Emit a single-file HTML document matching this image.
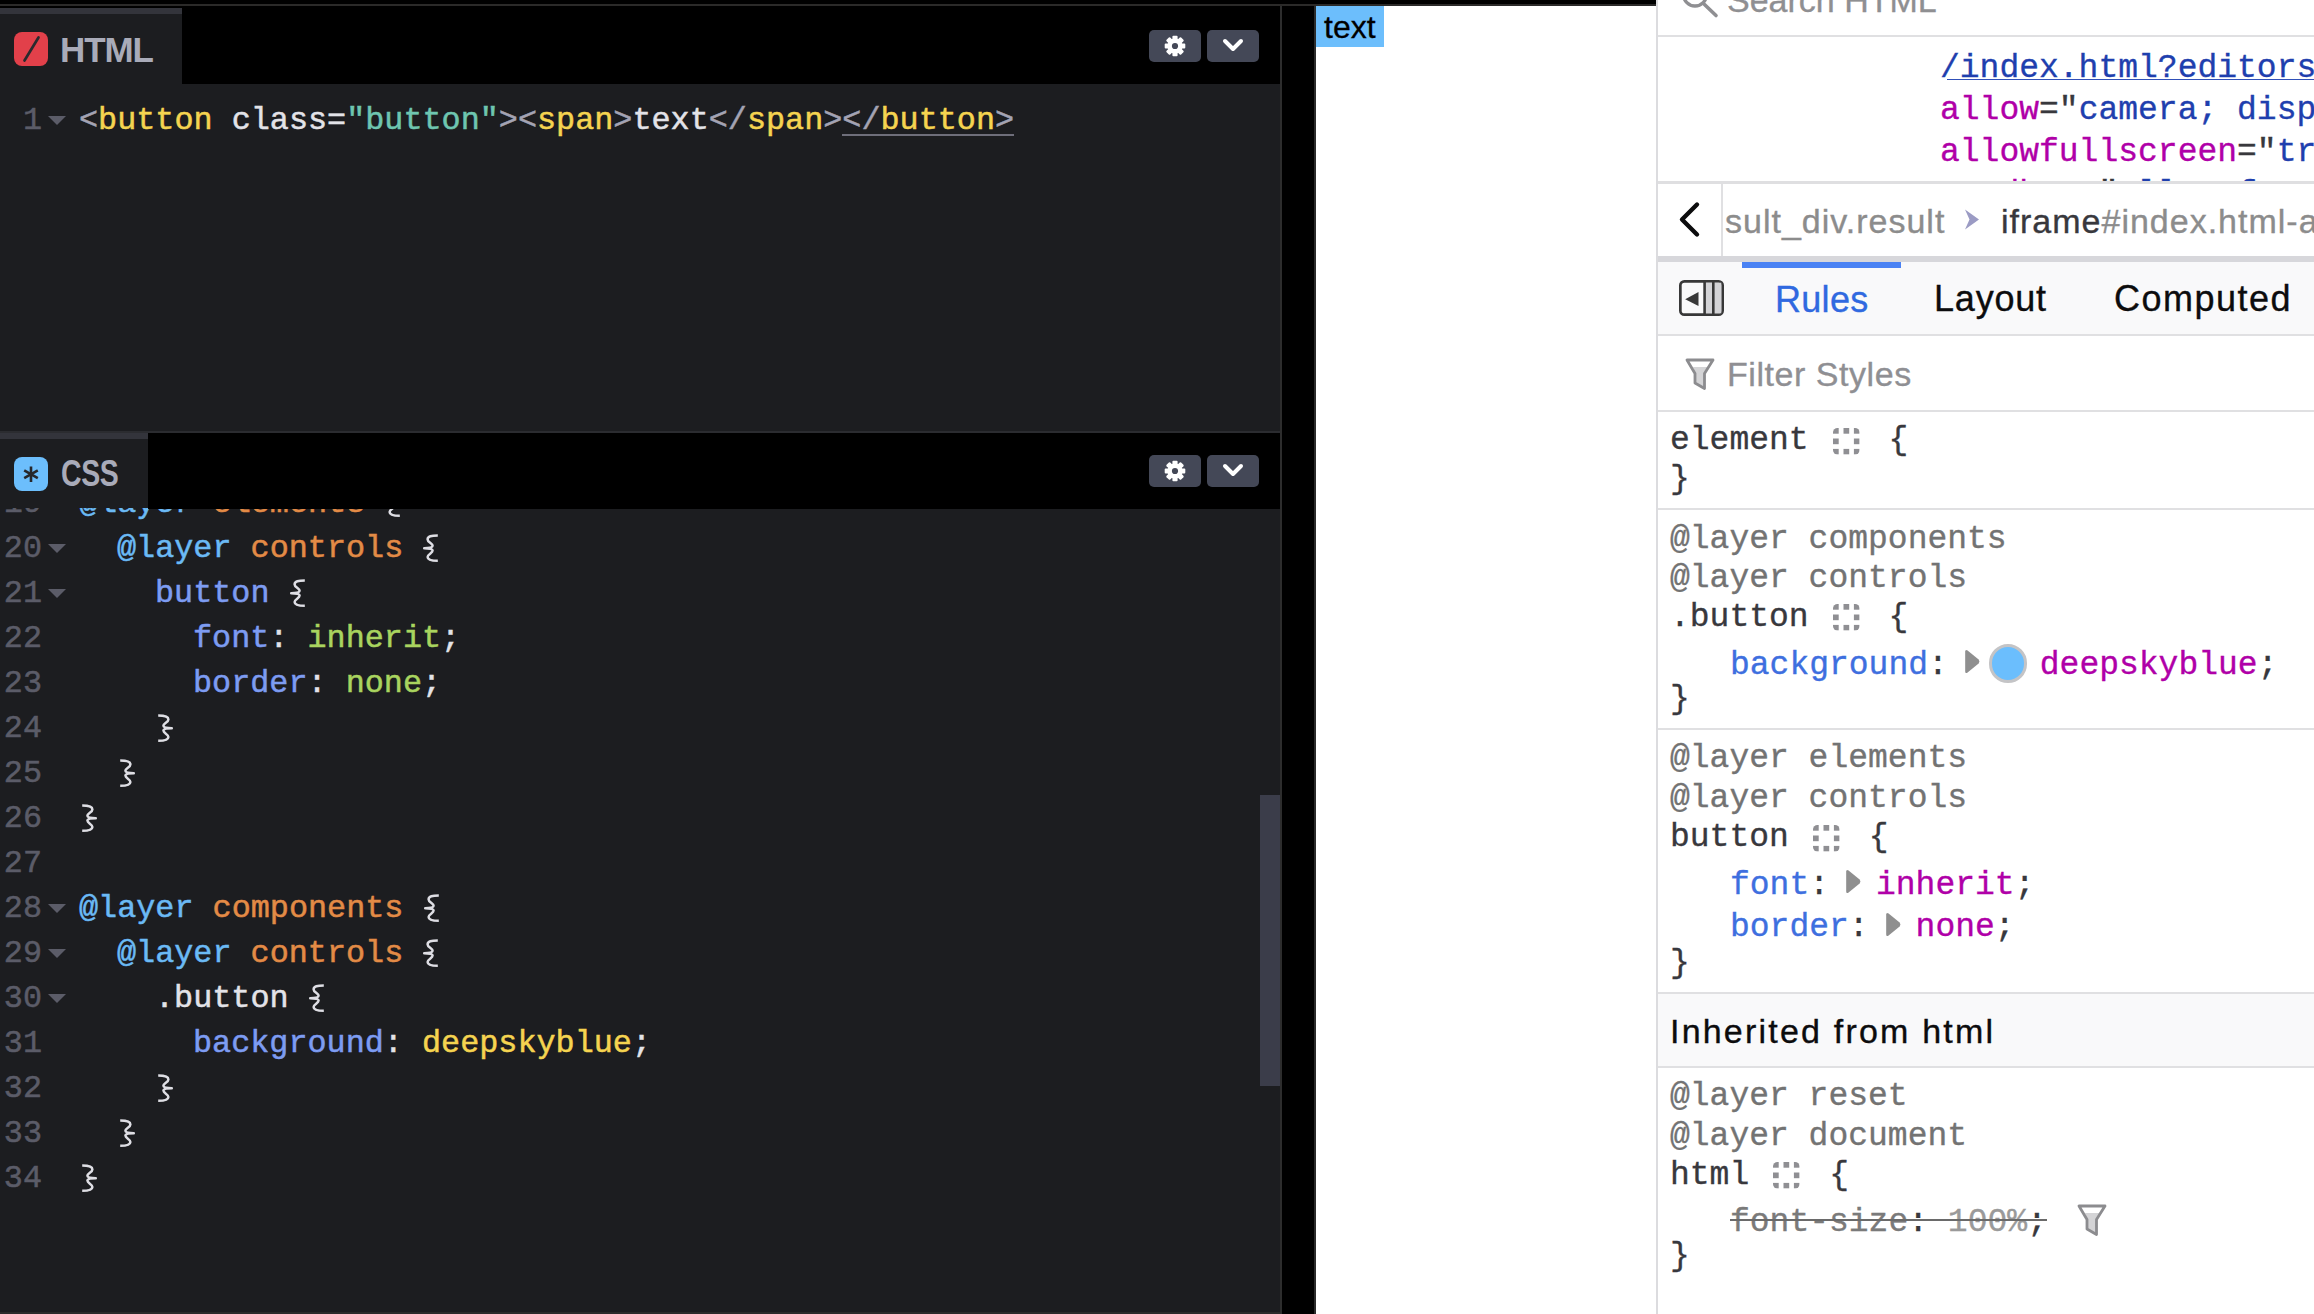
<!DOCTYPE html>
<html><head><meta charset="utf-8">
<style>
html,body{margin:0;padding:0}
body{width:2314px;height:1314px;position:relative;overflow:hidden;background:#000;font-family:"Liberation Sans",sans-serif}
.a{position:absolute}
.t{position:absolute;white-space:pre;line-height:1}
.cm{font-family:"Liberation Mono",monospace;font-size:31.8px;color:#e3e3e8;-webkit-text-stroke:0.5px currentColor}
.ln{font-family:"Liberation Mono",monospace;font-size:31.8px;color:#5b5c68;text-align:right;width:43px;left:0;-webkit-text-stroke:0.5px currentColor}
.fold{position:absolute;width:0;height:0;border-left:9px solid transparent;border-right:9px solid transparent;border-top:9px solid #5b5c68}
.dm{font-family:"Liberation Mono",monospace;font-size:33.0px;color:#38383d;-webkit-text-stroke:0.35px currentColor}
.ds{font-family:"Liberation Sans",sans-serif;-webkit-text-stroke:0.35px currentColor}
.pn{color:#a3a3b3}
.tg{color:#f5d450}
.at{color:#e3e3e8}
.st{color:#6ec6b0}
.kw{color:#6bbaf5}
.ly{color:#e38b46}
.sel{color:#7d9cf2}
.pr{color:#7d9cf2}
.vg{color:#a9d45f}
.vy{color:#f5d450}
.br{color:#dedee4}
.bx{display:inline-block;width:19px;height:0;position:relative;-webkit-text-stroke:0}
.bx svg{position:absolute;left:0;top:-22.9px}
.dp{color:#3e6fdf}
.dv{color:#b000a8}
.dg{color:#737373}
.dk{color:#38383d}
.db{color:#1f3fae}
</style></head><body>
<div class="a" style="left:0px;top:0px;width:1656px;height:4px;background:#000;"></div>
<div class="a" style="left:0px;top:4px;width:1656px;height:2px;background:#2b2a29;"></div>
<div class="a" style="left:0px;top:6px;width:1280px;height:1306px;background:#1c1d20;"></div>
<div class="a" style="left:0px;top:6px;width:1280px;height:2px;background:#000;"></div>
<div class="a" style="left:182px;top:8px;width:1098px;height:76px;background:#000;"></div>
<div class="a" style="left:0px;top:8px;width:182px;height:6px;background:#33343b;"></div>
<div class="a" style="left:14px;top:32px;width:34px;height:34px;background:#e2404a;border-radius:8px"></div>
<svg class="a" style="left:14px;top:32px" width="34" height="34"><path d="M10.5 28.5 L24.5 5.5" stroke="#2a2a2e" stroke-width="2.7" stroke-linecap="round"/></svg>
<div class="t" style="left:60px;top:31.7px;font-size:35px;font-weight:bold;color:#a9abb9;letter-spacing:-1.1px">HTML</div>
<div class="a" style="left:1149px;top:30px;width:52px;height:32px;background:#444857;border-radius:5px"></div>
<svg class="a" style="left:1164px;top:35px" width="22" height="22" viewBox="-11 -11 22 22"><g fill="#fff"><circle r="7.6"/><rect x="-2.6" y="-10.3" width="5.2" height="20.6" rx="1"/><rect x="-2.6" y="-10.3" width="5.2" height="20.6" rx="1" transform="rotate(45)"/><rect x="-2.6" y="-10.3" width="5.2" height="20.6" rx="1" transform="rotate(90)"/><rect x="-2.6" y="-10.3" width="5.2" height="20.6" rx="1" transform="rotate(135)"/></g><circle r="3.1" fill="#444857"/></svg>
<div class="a" style="left:1207px;top:30px;width:52px;height:32px;background:#444857;border-radius:5px"></div>
<svg class="a" style="left:1221px;top:37px" width="26" height="18" viewBox="0 0 26 18"><path d="M4 4 L12 12 L20 4" fill="none" stroke="#fff" stroke-width="4" stroke-linecap="round" stroke-linejoin="round"/></svg>
<div class="t ln" style="top:106px;left:-1px">1</div>
<div class="fold" style="left:48px;top:116px"></div>
<div class="t cm" style="left:79px;top:106px"><span class="pn">&lt;</span><span class="tg">button</span> <span class="at">class</span><span class="at">=</span><span class="st">"button"</span><span class="pn">&gt;&lt;</span><span class="tg">span</span><span class="pn">&gt;</span>text<span class="pn">&lt;/</span><span class="tg">span</span><span class="pn">&gt;&lt;/</span><span class="tg">button</span><span class="pn">&gt;</span></div>
<div class="a" style="left:842px;top:134px;width:172px;height:2px;background:#6e6e7a;"></div>
<div class="a" style="left:0px;top:431px;width:1280px;height:2px;background:#2b2c30;"></div>
<div class="a" style="left:0;top:508px;width:1280px;height:804px;overflow:hidden">
<div class="t ln" style="top:-19px;left:-1px">19</div>
<div class="fold" style="left:48px;top:-9px"></div>
<div class="t cm" style="left:79px;top:-19px"><span class="kw">@layer</span> <span class="ly">elements</span> <span class="bx"><svg width="19" height="30" viewBox="0 0 19 30"><path d="M15.8 1.6 C9.5 1.6 5.6 2.2 5.6 5.4 C5.6 8.2 10.6 9.2 10.6 11.8 C10.6 13.6 7.4 14.2 2.2 14.2 C7.4 14.2 10.6 14.8 10.6 16.6 C10.6 19.2 5.6 20.2 5.6 23 C5.6 26.2 9.5 26.8 15.8 26.8" fill="none" stroke="#dedee4" stroke-width="2.5" stroke-linecap="butt" stroke-linejoin="round"/></svg></span></div>
<div class="t ln" style="top:26px;left:-1px">20</div>
<div class="fold" style="left:48px;top:36px"></div>
<div class="t cm" style="left:117px;top:26px"><span class="kw">@layer</span> <span class="ly">controls</span> <span class="bx"><svg width="19" height="30" viewBox="0 0 19 30"><path d="M15.8 1.6 C9.5 1.6 5.6 2.2 5.6 5.4 C5.6 8.2 10.6 9.2 10.6 11.8 C10.6 13.6 7.4 14.2 2.2 14.2 C7.4 14.2 10.6 14.8 10.6 16.6 C10.6 19.2 5.6 20.2 5.6 23 C5.6 26.2 9.5 26.8 15.8 26.8" fill="none" stroke="#dedee4" stroke-width="2.5" stroke-linecap="butt" stroke-linejoin="round"/></svg></span></div>
<div class="t ln" style="top:71px;left:-1px">21</div>
<div class="fold" style="left:48px;top:81px"></div>
<div class="t cm" style="left:155px;top:71px"><span class="sel">button</span> <span class="bx"><svg width="19" height="30" viewBox="0 0 19 30"><path d="M15.8 1.6 C9.5 1.6 5.6 2.2 5.6 5.4 C5.6 8.2 10.6 9.2 10.6 11.8 C10.6 13.6 7.4 14.2 2.2 14.2 C7.4 14.2 10.6 14.8 10.6 16.6 C10.6 19.2 5.6 20.2 5.6 23 C5.6 26.2 9.5 26.8 15.8 26.8" fill="none" stroke="#dedee4" stroke-width="2.5" stroke-linecap="butt" stroke-linejoin="round"/></svg></span></div>
<div class="t ln" style="top:116px;left:-1px">22</div>
<div class="t cm" style="left:193px;top:116px"><span class="pr">font</span>: <span class="vg">inherit</span>;</div>
<div class="t ln" style="top:161px;left:-1px">23</div>
<div class="t cm" style="left:193px;top:161px"><span class="pr">border</span>: <span class="vg">none</span>;</div>
<div class="t ln" style="top:206px;left:-1px">24</div>
<div class="t cm" style="left:155px;top:206px"><span class="bx"><svg width="19" height="30" viewBox="0 0 19 30"><path d="M 3.2 1.6 C 9.5 1.6 13.4 2.2 13.4 5.4 C 13.4 8.2 8.4 9.2 8.4 11.8 C 8.4 13.6 11.6 14.2 16.8 14.2 C 11.6 14.2 8.4 14.8 8.4 16.6 C 8.4 19.2 13.4 20.2 13.4 23 C 13.4 26.2 9.5 26.8 3.2 26.8" fill="none" stroke="#dedee4" stroke-width="2.5" stroke-linecap="butt" stroke-linejoin="round"/></svg></span></div>
<div class="t ln" style="top:251px;left:-1px">25</div>
<div class="t cm" style="left:117px;top:251px"><span class="bx"><svg width="19" height="30" viewBox="0 0 19 30"><path d="M 3.2 1.6 C 9.5 1.6 13.4 2.2 13.4 5.4 C 13.4 8.2 8.4 9.2 8.4 11.8 C 8.4 13.6 11.6 14.2 16.8 14.2 C 11.6 14.2 8.4 14.8 8.4 16.6 C 8.4 19.2 13.4 20.2 13.4 23 C 13.4 26.2 9.5 26.8 3.2 26.8" fill="none" stroke="#dedee4" stroke-width="2.5" stroke-linecap="butt" stroke-linejoin="round"/></svg></span></div>
<div class="t ln" style="top:296px;left:-1px">26</div>
<div class="t cm" style="left:79px;top:296px"><span class="bx"><svg width="19" height="30" viewBox="0 0 19 30"><path d="M 3.2 1.6 C 9.5 1.6 13.4 2.2 13.4 5.4 C 13.4 8.2 8.4 9.2 8.4 11.8 C 8.4 13.6 11.6 14.2 16.8 14.2 C 11.6 14.2 8.4 14.8 8.4 16.6 C 8.4 19.2 13.4 20.2 13.4 23 C 13.4 26.2 9.5 26.8 3.2 26.8" fill="none" stroke="#dedee4" stroke-width="2.5" stroke-linecap="butt" stroke-linejoin="round"/></svg></span></div>
<div class="t ln" style="top:341px;left:-1px">27</div>
<div class="t cm" style="left:79px;top:341px"></div>
<div class="t ln" style="top:386px;left:-1px">28</div>
<div class="fold" style="left:48px;top:396px"></div>
<div class="t cm" style="left:79px;top:386px"><span class="kw">@layer</span> <span class="ly">components</span> <span class="bx"><svg width="19" height="30" viewBox="0 0 19 30"><path d="M15.8 1.6 C9.5 1.6 5.6 2.2 5.6 5.4 C5.6 8.2 10.6 9.2 10.6 11.8 C10.6 13.6 7.4 14.2 2.2 14.2 C7.4 14.2 10.6 14.8 10.6 16.6 C10.6 19.2 5.6 20.2 5.6 23 C5.6 26.2 9.5 26.8 15.8 26.8" fill="none" stroke="#dedee4" stroke-width="2.5" stroke-linecap="butt" stroke-linejoin="round"/></svg></span></div>
<div class="t ln" style="top:431px;left:-1px">29</div>
<div class="fold" style="left:48px;top:441px"></div>
<div class="t cm" style="left:117px;top:431px"><span class="kw">@layer</span> <span class="ly">controls</span> <span class="bx"><svg width="19" height="30" viewBox="0 0 19 30"><path d="M15.8 1.6 C9.5 1.6 5.6 2.2 5.6 5.4 C5.6 8.2 10.6 9.2 10.6 11.8 C10.6 13.6 7.4 14.2 2.2 14.2 C7.4 14.2 10.6 14.8 10.6 16.6 C10.6 19.2 5.6 20.2 5.6 23 C5.6 26.2 9.5 26.8 15.8 26.8" fill="none" stroke="#dedee4" stroke-width="2.5" stroke-linecap="butt" stroke-linejoin="round"/></svg></span></div>
<div class="t ln" style="top:476px;left:-1px">30</div>
<div class="fold" style="left:48px;top:486px"></div>
<div class="t cm" style="left:155px;top:476px">.button <span class="bx"><svg width="19" height="30" viewBox="0 0 19 30"><path d="M15.8 1.6 C9.5 1.6 5.6 2.2 5.6 5.4 C5.6 8.2 10.6 9.2 10.6 11.8 C10.6 13.6 7.4 14.2 2.2 14.2 C7.4 14.2 10.6 14.8 10.6 16.6 C10.6 19.2 5.6 20.2 5.6 23 C5.6 26.2 9.5 26.8 15.8 26.8" fill="none" stroke="#dedee4" stroke-width="2.5" stroke-linecap="butt" stroke-linejoin="round"/></svg></span></div>
<div class="t ln" style="top:521px;left:-1px">31</div>
<div class="t cm" style="left:193px;top:521px"><span class="pr">background</span>: <span class="vy">deepskyblue</span>;</div>
<div class="t ln" style="top:566px;left:-1px">32</div>
<div class="t cm" style="left:155px;top:566px"><span class="bx"><svg width="19" height="30" viewBox="0 0 19 30"><path d="M 3.2 1.6 C 9.5 1.6 13.4 2.2 13.4 5.4 C 13.4 8.2 8.4 9.2 8.4 11.8 C 8.4 13.6 11.6 14.2 16.8 14.2 C 11.6 14.2 8.4 14.8 8.4 16.6 C 8.4 19.2 13.4 20.2 13.4 23 C 13.4 26.2 9.5 26.8 3.2 26.8" fill="none" stroke="#dedee4" stroke-width="2.5" stroke-linecap="butt" stroke-linejoin="round"/></svg></span></div>
<div class="t ln" style="top:611px;left:-1px">33</div>
<div class="t cm" style="left:117px;top:611px"><span class="bx"><svg width="19" height="30" viewBox="0 0 19 30"><path d="M 3.2 1.6 C 9.5 1.6 13.4 2.2 13.4 5.4 C 13.4 8.2 8.4 9.2 8.4 11.8 C 8.4 13.6 11.6 14.2 16.8 14.2 C 11.6 14.2 8.4 14.8 8.4 16.6 C 8.4 19.2 13.4 20.2 13.4 23 C 13.4 26.2 9.5 26.8 3.2 26.8" fill="none" stroke="#dedee4" stroke-width="2.5" stroke-linecap="butt" stroke-linejoin="round"/></svg></span></div>
<div class="t ln" style="top:656px;left:-1px">34</div>
<div class="t cm" style="left:79px;top:656px"><span class="bx"><svg width="19" height="30" viewBox="0 0 19 30"><path d="M 3.2 1.6 C 9.5 1.6 13.4 2.2 13.4 5.4 C 13.4 8.2 8.4 9.2 8.4 11.8 C 8.4 13.6 11.6 14.2 16.8 14.2 C 11.6 14.2 8.4 14.8 8.4 16.6 C 8.4 19.2 13.4 20.2 13.4 23 C 13.4 26.2 9.5 26.8 3.2 26.8" fill="none" stroke="#dedee4" stroke-width="2.5" stroke-linecap="butt" stroke-linejoin="round"/></svg></span></div>
<div class="a" style="left:1260px;top:287px;width:20px;height:291px;background:#3b3d4a;"></div>
</div>
<div class="a" style="left:148px;top:433px;width:1132px;height:76px;background:#000;"></div>
<div class="a" style="left:0px;top:433px;width:148px;height:6px;background:#33343b;"></div>
<div class="a" style="left:14px;top:457px;width:34px;height:34px;background:#6cbefc;border-radius:8px"></div>
<svg class="a" style="left:14px;top:457px" width="34" height="34" viewBox="0 0 34 34"><g stroke="#26272b" stroke-width="2.6"><path d="M17 9.5 V25"/><path d="M10.2 13.4 L23.8 21.1"/><path d="M10.2 21.1 L23.8 13.4"/></g></svg>
<div class="t" style="left:61px;top:456px;font-size:36px;font-weight:bold;color:#a9abb9;letter-spacing:-0.5px;transform:scaleX(0.79);transform-origin:0 0">CSS</div>
<div class="a" style="left:1149px;top:455px;width:52px;height:32px;background:#444857;border-radius:5px"></div>
<svg class="a" style="left:1164px;top:460px" width="22" height="22" viewBox="-11 -11 22 22"><g fill="#fff"><circle r="7.6"/><rect x="-2.6" y="-10.3" width="5.2" height="20.6" rx="1"/><rect x="-2.6" y="-10.3" width="5.2" height="20.6" rx="1" transform="rotate(45)"/><rect x="-2.6" y="-10.3" width="5.2" height="20.6" rx="1" transform="rotate(90)"/><rect x="-2.6" y="-10.3" width="5.2" height="20.6" rx="1" transform="rotate(135)"/></g><circle r="3.1" fill="#444857"/></svg>
<div class="a" style="left:1207px;top:455px;width:52px;height:32px;background:#444857;border-radius:5px"></div>
<svg class="a" style="left:1221px;top:462px" width="26" height="18" viewBox="0 0 26 18"><path d="M4 4 L12 12 L20 4" fill="none" stroke="#fff" stroke-width="4" stroke-linecap="round" stroke-linejoin="round"/></svg>
<div class="a" style="left:0px;top:1312px;width:1282px;height:2px;background:#2b2b2b;"></div>
<div class="a" style="left:1280px;top:6px;width:2px;height:1308px;background:#2d2d2d;"></div>
<div class="a" style="left:1314px;top:6px;width:2px;height:1308px;background:#2b2b2b;"></div>
<div class="a" style="left:1316px;top:6px;width:340px;height:1308px;background:#fff;"></div>
<div class="a" style="left:1316px;top:6px;width:68px;height:41px;background:#6cbefc;"></div>
<div class="t ds" style="left:1324px;top:11px;font-size:32px;color:#000;-webkit-text-stroke:0.3px #000">text</div>
<div class="a" style="left:1656px;top:0px;width:658px;height:1314px;background:#fff;"></div>
<div class="a" style="left:1656px;top:0px;width:2px;height:1314px;background:#dcdcdf;"></div>
<svg class="a" style="left:1676px;top:0" width="50" height="24" viewBox="0 0 50 24"><circle cx="19" cy="-5.5" r="11.5" fill="none" stroke="#8f8f92" stroke-width="3.4"/><path d="M28.5 4.5 L40 15.5" stroke="#8f8f92" stroke-width="3.6" stroke-linecap="round"/></svg>
<div class="t ds" style="left:1727px;top:-16.9px;font-size:34px;color:#8f8f92">Search HTML</div>
<div class="a" style="left:1658px;top:35px;width:656px;height:2px;background:#e0e0e2;"></div>
<div class="a" style="left:1658px;top:37px;width:656px;height:144px;overflow:hidden">
<div class="t dm" style="left:282px;top:14.9px"><span class="db">/index.html?editors=1100</span></div>
<div class="a" style="left:289px;top:41.5px;width:400px;height:1.6px;background:#3050b8;"></div>
<div class="t dm" style="left:282px;top:56.5px"><span class="dv">allow</span>="<span class="db">camera; display-capture</span>"</div>
<div class="t dm" style="left:282px;top:98.5px"><span class="dv">allowfullscreen</span>="<span class="db">true</span>"</div>
<div class="t dm" style="left:282px;top:140.5px"><span class="dv">sandbox</span>="<span class="db">allow-forms</span>"</div>
</div>
<div class="a" style="left:1658px;top:181px;width:656px;height:3px;background:#dfdfe1;"></div>
<svg class="a" style="left:1672px;top:196px" width="36" height="48" viewBox="0 0 36 48"><path d="M25 8.5 L10 23.5 L25 38.5" fill="none" stroke="#0c0c0d" stroke-width="4.4" stroke-linecap="round" stroke-linejoin="round"/></svg>
<div class="a" style="left:1721px;top:184px;width:2px;height:72px;background:#e0e0e2;"></div>
<div class="a" style="left:1723px;top:184px;width:591px;height:72px;overflow:hidden">
<div class="t ds" style="left:2px;top:20.1px;font-size:34px;color:#8c8c8c;letter-spacing:1px">sult_div.result</div>
<svg class="a" style="left:240px;top:24px" width="18" height="24" viewBox="0 0 18 24"><path d="M2 1.5 L16 11.5 L2 21.5 L6.5 11.5 Z" fill="#9b9bc4"/></svg>
<div class="t ds" style="left:278px;top:20.1px;font-size:34px;color:#38383d;letter-spacing:1px">iframe<span style="color:#8c8c8c">#index.html-a</span></div>
</div>
<div class="a" style="left:1658px;top:256px;width:656px;height:6px;background:#d7d7db;"></div>
<div class="a" style="left:1658px;top:262px;width:656px;height:72px;background:#f9f9fa;"></div>
<div class="a" style="left:1742px;top:262px;width:159px;height:6px;background:#4a82f4;"></div>
<div class="a" style="left:1658px;top:334px;width:656px;height:2px;background:#e0e0e2;"></div>
<svg class="a" style="left:1679px;top:280px" width="45" height="36" viewBox="0 0 45 36"><rect x="1.35" y="1.35" width="42.3" height="33.3" rx="4" fill="#f9f9fa" stroke="#383838" stroke-width="2.7"/><rect x="26.5" y="2.7" width="7.5" height="30.6" fill="#d3d3d6"/><rect x="34" y="2.7" width="8.3" height="30.6" fill="#d3d3d6"/><rect x="24.3" y="2" width="2.6" height="32" fill="#383838"/><rect x="33" y="2" width="2.6" height="32" fill="#383838"/><path d="M6.2 19.3 L19.5 12 V26 Z" fill="#383838"/></svg>
<div class="t ds" style="left:1775px;top:281.9px;font-size:36px;color:#3069e0;letter-spacing:0.3px">Rules</div>
<div class="t ds" style="left:1934px;top:281.4px;font-size:36px;color:#0c0c0d;letter-spacing:0.8px">Layout</div>
<div class="t ds" style="left:2114px;top:281.4px;font-size:36px;color:#0c0c0d;letter-spacing:1.5px">Computed</div>
<svg class="a" style="left:1675px;top:350px" width="50" height="50" viewBox="0 0 50 50"><path d="M18 17 H33 L29.5 23.5 V38.5 L20 33 V23.5 Z" fill="#d4d4d6"/><path d="M12 10 H38 L29.5 23.5 V38.5 L20 33 V23.5 Z" fill="none" stroke="#8c8c8f" stroke-width="2.8" stroke-linejoin="round"/></svg>
<div class="t ds" style="left:1727px;top:357.4px;font-size:34px;color:#8f8f93;letter-spacing:0.55px">Filter Styles</div>
<div class="a" style="left:1658px;top:410px;width:656px;height:2px;background:#e0e0e2;"></div>
<div class="t dm" style="left:1670.0px;top:423.9px"><span class="dk">element</span></div>
<svg class="a" style="left:1832.6px;top:427.5px" width="27" height="27" viewBox="0 0 27 27"><defs><clipPath id="c1"><rect width="26.6" height="26.6" rx="4.5"/></clipPath></defs><g fill="#8f8f93" clip-path="url(#c1)"><rect x="0" y="0" width="5.7" height="5.7"/><rect x="10.5" y="0" width="5.7" height="5.7"/><rect x="20.9" y="0" width="5.7" height="5.7"/><rect x="0" y="10.5" width="5.7" height="5.7"/><rect x="20.9" y="10.5" width="5.7" height="5.7"/><rect x="0" y="20.9" width="5.7" height="5.7"/><rect x="10.5" y="20.9" width="5.7" height="5.7"/><rect x="20.9" y="20.9" width="5.7" height="5.7"/></g></svg>
<div class="t dm" style="left:1888.6px;top:423.9px"><span class="dk">{</span></div>
<div class="t dm" style="left:1670.0px;top:462.9px"><span class="dk">}</span></div>
<div class="a" style="left:1658px;top:508px;width:656px;height:2px;background:#e0e0e2;"></div>
<div class="t dm" style="left:1670.0px;top:522.9px"><span class="dg">@layer components</span></div>
<div class="t dm" style="left:1670.0px;top:561.9px"><span class="dg">@layer controls</span></div>
<div class="t dm" style="left:1670.0px;top:600.7px"><span class="dk">.button</span></div>
<svg class="a" style="left:1832.6px;top:604.3px" width="27" height="27" viewBox="0 0 27 27"><defs><clipPath id="c2"><rect width="26.6" height="26.6" rx="4.5"/></clipPath></defs><g fill="#8f8f93" clip-path="url(#c2)"><rect x="0" y="0" width="5.7" height="5.7"/><rect x="10.5" y="0" width="5.7" height="5.7"/><rect x="20.9" y="0" width="5.7" height="5.7"/><rect x="0" y="10.5" width="5.7" height="5.7"/><rect x="20.9" y="10.5" width="5.7" height="5.7"/><rect x="0" y="20.9" width="5.7" height="5.7"/><rect x="10.5" y="20.9" width="5.7" height="5.7"/><rect x="20.9" y="20.9" width="5.7" height="5.7"/></g></svg>
<div class="t dm" style="left:1888.6px;top:600.7px"><span class="dk">{</span></div>
<div class="t dm" style="left:1730.0px;top:648.6px"><span class="dp">background</span><span class="dk">:</span></div>
<svg class="a" style="left:1963.8px;top:649.2px" width="17" height="25" viewBox="0 0 17 25"><path d="M1.2 2.6 Q1.2 0 3.6 1.5 L14.6 10.6 Q16.3 12.5 14.6 14.4 L3.6 23.5 Q1.2 25 1.2 22.4 Z" fill="#8f8f8f"/></svg>
<div class="a" style="left:1988.8px;top:644.2px;width:32.5px;height:32.5px;border-radius:50%;background:#6bbefd;border:3px solid #c4c4c6"></div>
<div class="t dm" style="left:2039.8px;top:648.6px"><span class="dv">deepskyblue</span><span class="dk">;</span></div>
<div class="t dm" style="left:1670.0px;top:682.9px"><span class="dk">}</span></div>
<div class="a" style="left:1658px;top:728px;width:656px;height:2px;background:#e0e0e2;"></div>
<div class="t dm" style="left:1670.0px;top:742.2px"><span class="dg">@layer elements</span></div>
<div class="t dm" style="left:1670.0px;top:781.9px"><span class="dg">@layer controls</span></div>
<div class="t dm" style="left:1670.0px;top:821.1px"><span class="dk">button</span></div>
<svg class="a" style="left:1812.8px;top:824.7px" width="27" height="27" viewBox="0 0 27 27"><defs><clipPath id="c3"><rect width="26.6" height="26.6" rx="4.5"/></clipPath></defs><g fill="#8f8f93" clip-path="url(#c3)"><rect x="0" y="0" width="5.7" height="5.7"/><rect x="10.5" y="0" width="5.7" height="5.7"/><rect x="20.9" y="0" width="5.7" height="5.7"/><rect x="0" y="10.5" width="5.7" height="5.7"/><rect x="20.9" y="10.5" width="5.7" height="5.7"/><rect x="0" y="20.9" width="5.7" height="5.7"/><rect x="10.5" y="20.9" width="5.7" height="5.7"/><rect x="20.9" y="20.9" width="5.7" height="5.7"/></g></svg>
<div class="t dm" style="left:1868.8px;top:821.1px"><span class="dk">{</span></div>
<div class="t dm" style="left:1730.0px;top:868.5px"><span class="dp">font</span><span class="dk">:</span></div>
<svg class="a" style="left:1845.0px;top:869.1px" width="17" height="25" viewBox="0 0 17 25"><path d="M1.2 2.6 Q1.2 0 3.6 1.5 L14.6 10.6 Q16.3 12.5 14.6 14.4 L3.6 23.5 Q1.2 25 1.2 22.4 Z" fill="#8f8f8f"/></svg>
<div class="t dm" style="left:1876.0px;top:868.5px"><span class="dv">inherit</span><span class="dk">;</span></div>
<div class="t dm" style="left:1730.0px;top:910.9px"><span class="dp">border</span><span class="dk">:</span></div>
<svg class="a" style="left:1884.6px;top:911.5px" width="17" height="25" viewBox="0 0 17 25"><path d="M1.2 2.6 Q1.2 0 3.6 1.5 L14.6 10.6 Q16.3 12.5 14.6 14.4 L3.6 23.5 Q1.2 25 1.2 22.4 Z" fill="#8f8f8f"/></svg>
<div class="t dm" style="left:1915.6px;top:910.9px"><span class="dv">none</span><span class="dk">;</span></div>
<div class="t dm" style="left:1670.0px;top:946.9px"><span class="dk">}</span></div>
<div class="a" style="left:1658px;top:992px;width:656px;height:2px;background:#e0e0e2;"></div>
<div class="a" style="left:1658px;top:994px;width:656px;height:72px;background:#f9f9fa;"></div>
<div class="t ds" style="left:1670px;top:1014.1px;font-size:34px;color:#0c0c0d;letter-spacing:2.2px">Inherited from html</div>
<div class="a" style="left:1658px;top:1066px;width:656px;height:2px;background:#e0e0e2;"></div>
<div class="t dm" style="left:1670.0px;top:1079.7px"><span class="dg">@layer reset</span></div>
<div class="t dm" style="left:1670.0px;top:1119.9px"><span class="dg">@layer document</span></div>
<div class="t dm" style="left:1670.0px;top:1158.6px"><span class="dk">html</span></div>
<svg class="a" style="left:1773.2px;top:1162.2px" width="27" height="27" viewBox="0 0 27 27"><defs><clipPath id="c4"><rect width="26.6" height="26.6" rx="4.5"/></clipPath></defs><g fill="#8f8f93" clip-path="url(#c4)"><rect x="0" y="0" width="5.7" height="5.7"/><rect x="10.5" y="0" width="5.7" height="5.7"/><rect x="20.9" y="0" width="5.7" height="5.7"/><rect x="0" y="10.5" width="5.7" height="5.7"/><rect x="20.9" y="10.5" width="5.7" height="5.7"/><rect x="0" y="20.9" width="5.7" height="5.7"/><rect x="10.5" y="20.9" width="5.7" height="5.7"/><rect x="20.9" y="20.9" width="5.7" height="5.7"/></g></svg>
<div class="t dm" style="left:1829.2px;top:1158.6px"><span class="dk">{</span></div>
<div class="t dm" style="left:1730.0px;top:1205.9px"><span style="color:#7a7a7a">font-size</span><span class="dk">:</span> <span style="color:#9a9a9a">100%</span><span class="dk">;</span></div>
<div class="a" style="left:1730px;top:1219px;width:317px;height:2px;background:#6a6a6a;"></div>
<svg class="a" style="left:2067px;top:1196px" width="50" height="50" viewBox="0 0 50 50"><path d="M18 17 H33 L29.5 23.5 V38.5 L20 33 V23.5 Z" fill="#d4d4d6"/><path d="M12 10 H38 L29.5 23.5 V38.5 L20 33 V23.5 Z" fill="none" stroke="#8c8c8f" stroke-width="2.8" stroke-linejoin="round"/></svg>
<div class="t dm" style="left:1670.0px;top:1239.9px"><span class="dk">}</span></div>
</body></html>
